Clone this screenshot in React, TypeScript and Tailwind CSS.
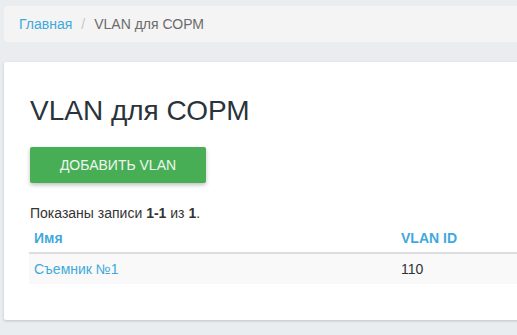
export default function App() {
   return (
      <div className="h-[335px] w-screen overflow-hidden bg-[#e9edf0] font-['Liberation_Sans',Arial,sans-serif]">
         <div className="w-[900px] pl-[4px] pt-[6px]">
            <nav className="flex h-[36px] items-center rounded-[4px] bg-[#f4f4f4] px-[15px] text-[14px] leading-[20px]">
               <a href="#" className="text-[#3fa9dc]">
                  Главная
               </a>
               <span className="px-[9px] text-[#c8c8c8]">/</span>
               <span className="text-[#6b6b6b]">VLAN для СОРМ</span>
            </nav>

            <main className="mt-[20px] h-[258px] rounded-[2px] bg-white px-[26px] pt-[32px] shadow-[0_1px_3px_rgba(0,0,0,0.18)]">
               <h1 className="text-[28px] leading-[34px] text-[#2b333a]">
                  VLAN для СОРМ
               </h1>
               <button className="mt-[19px] flex h-[36px] w-[176px] items-center justify-center rounded-[2px] bg-[#47ae55] text-[14px] uppercase text-white/90 shadow-[0_2px_4px_rgba(0,0,0,0.25)]">
                  Добавить VLAN
               </button>

               <div className="mt-[21px] text-[14px] leading-[19px] text-[#333]">
                  Показаны записи <b>1-1</b> из <b>1</b>.
               </div>

               <table className="-ml-[1px] w-[860px] border-collapse text-[14px] leading-[20px]">
                  <thead>
                     <tr className="border-b-2 border-[#dddddd]">
                        <th className="w-[367px] px-[5px] pt-[5px] pb-[4px] text-left font-bold text-[#3fa9dc]">
                           Имя
                        </th>
                        <th className="px-[5px] pt-[5px] pb-[4px] text-left font-bold text-[#3fa9dc]">
                           VLAN ID
                        </th>
                     </tr>
                  </thead>
                  <tbody>
                     <tr className="bg-[#f9f9f9]">
                        <td className="px-[5px] py-[5px]">
                           <a href="#" className="text-[#3fa9dc]">
                              Съемник №1
                           </a>
                        </td>
                        <td className="px-[5px] py-[5px] text-[#333]">110</td>
                     </tr>
                  </tbody>
               </table>
            </main>
         </div>
      </div>
   );
}
